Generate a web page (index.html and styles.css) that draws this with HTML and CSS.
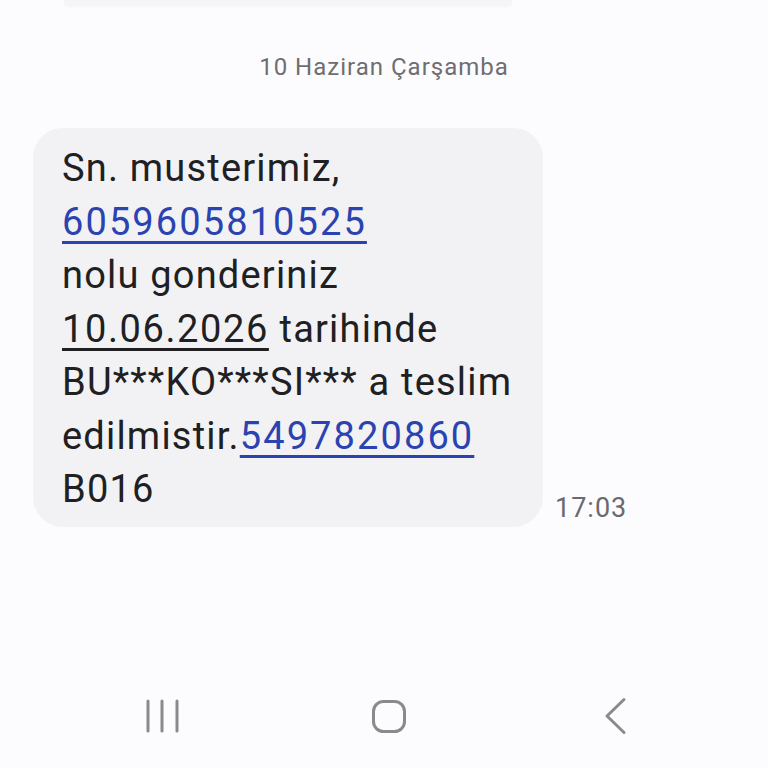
FILE: index.html
```html
<!DOCTYPE html>
<html lang="tr">
<head>
<meta charset="utf-8">
<title>Mesaj</title>
<link rel="stylesheet" href="styles.css">
</head>
<body>
<div class="screen">
  <div class="prev-bubble"></div>
  <div class="date-header">10 Haziran Çarşamba</div>
  <div class="message-row">
    <div class="bubble">
      Sn. musterimiz,<br>
      <span class="link">6059605810525</span><br>
      nolu gonderiniz<br>
      <span class="date-link">10.06.2026</span> tarihinde<br>
      BU***KO***SI*** a teslim<br>
      edilmistir.<span class="link">5497820860</span><br>
      B016
    </div>
    <div class="time">17:03</div>
  </div>
  <nav class="navbar">
    <svg class="nav-icon" width="40" height="40" viewBox="0 0 40 40" aria-label="Son uygulamalar">
      <g stroke="#8a8a8c" stroke-width="3" stroke-linecap="round">
        <line x1="6" y1="5" x2="6" y2="35"/>
        <line x1="20" y1="5" x2="20" y2="35"/>
        <line x1="35" y1="5" x2="35" y2="35"/>
      </g>
    </svg>
    <svg class="nav-icon" width="40" height="40" viewBox="0 0 40 40" aria-label="Ana ekran">
      <rect x="4.5" y="5.5" width="31" height="30" rx="10" ry="10" fill="none" stroke="#8a8a8c" stroke-width="3"/>
    </svg>
    <svg class="nav-icon" width="40" height="40" viewBox="0 0 40 40" aria-label="Geri">
      <polyline points="28,3.5 11,20 28,36.5" fill="none" stroke="#8a8a8c" stroke-width="3" stroke-linecap="round" stroke-linejoin="round"/>
    </svg>
  </nav>
</div>
</body>
</html>
```
FILE: styles.css
```css
* { box-sizing: border-box; }
html, body {
  margin: 0;
  padding: 0;
  background: #fcfcfe;
}
body {
  font-family: Roboto, "Noto Sans", "Liberation Sans", sans-serif;
  color: #222224;
}
.screen {
  width: 768px;
  height: 768px;
  display: flex;
  flex-direction: column;
  overflow: hidden;
}
.prev-bubble {
  height: 6px;
  width: 448px;
  margin-left: 64px;
  background: #f5f5f7;
  border-radius: 0 0 4px 4px;
  box-shadow: 0 1px 2px rgba(0,0,0,0.03);
}
.date-header {
  margin-top: 46px;
  text-align: center;
  font-size: 24px;
  line-height: 30px;
  letter-spacing: 1px;
  color: #6e6e72;
}
.message-row {
  margin-top: 46px;
  display: flex;
  align-items: flex-end;
  padding-left: 33px;
  gap: 12px;
}
.bubble {
  width: 510px;
  background: #f2f2f4;
  border-radius: 30px;
  padding: 14px 10px 10px 29px;
  font-size: 38px;
  line-height: 53.5px;
  letter-spacing: 1.2px;
  color: #202022;
  white-space: nowrap;
}
.link {
  color: #2b43b0;
  letter-spacing: 2.1px;
  text-decoration: underline;
  text-decoration-thickness: 3px;
  text-underline-offset: 6px;
}
.date-link {
  letter-spacing: 1.6px;
  text-decoration: underline;
  text-decoration-thickness: 3px;
  text-underline-offset: 6px;
}
.time {
  font-size: 27px;
  line-height: 30px;
  letter-spacing: 1px;
  color: #6a6a6e;
  margin-bottom: 4px;
}
.navbar {
  margin-top: auto;
  height: 72px;
  display: flex;
  align-items: flex-start;
  padding-left: 142px;
  gap: 187px;
}
.nav-icon {
  display: block;
  flex: none;
}
```
